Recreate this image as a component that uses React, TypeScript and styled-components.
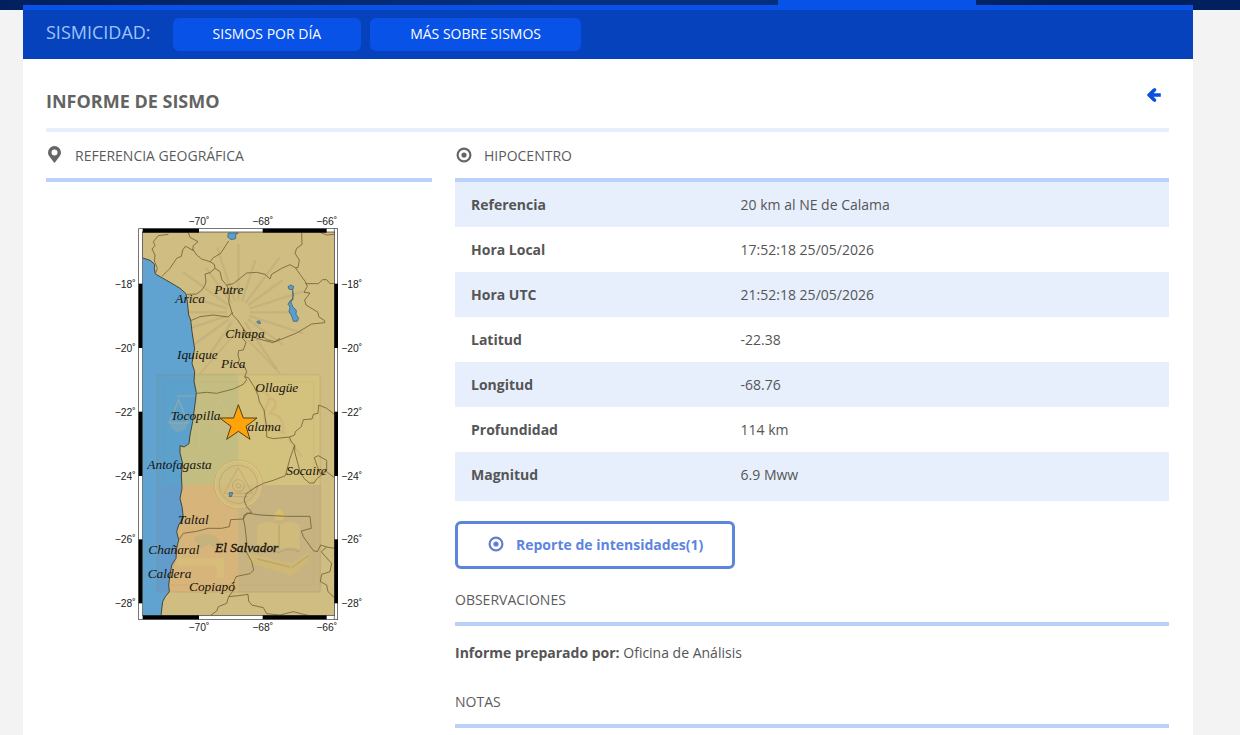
import React from "react";
import styled, { createGlobalStyle } from "styled-components";

const GlobalStyle = createGlobalStyle`
  *, *::before, *::after { box-sizing: border-box; }
  body {
    margin: 0;
    background: #f3f3f3;
    color: #555;
    font-family: "Open Sans", sans-serif;
    font-size: 14px;
    line-height: 20px;
  }
  h1, h2, p { margin: 0; }
`;

const Shell = styled.div`
  display: flex;
  flex-direction: column;
  min-height: 100vh;
`;

const TopStrip = styled.div`
  flex: none;
  display: flex;
  justify-content: flex-end;
  height: 10px;
  padding: 0 264px 0 23px;
  background: linear-gradient(90deg, #03205e 0%, #05307f 45%, #05307f 62%, #03205e 85%);
`;

const ActiveTab = styled.div`
  width: 198px;
  background: #0952e8;
`;

const Page = styled.div`
  flex: 1;
  margin: -5px 47px 0 23px;
  background: #fff;
`;

const SubNav = styled.nav`
  display: flex;
  align-items: center;
  gap: 9px;
  height: 54px;
  padding: 0 23px;
  border-top: 5px solid #0952e8;
  background: #0542bb;
`;

const SubNavTitle = styled.span`
  margin-right: 13px;
  padding-bottom: 6px;
  color: #9cc5fb;
  font-size: 18px;
  line-height: 24px;
`;

const NavLink = styled.a`
  padding: 6px 40px 7px;
  border-radius: 6px;
  background: #0952e8;
  color: #fff;
  text-decoration: none;
`;

const Content = styled.main`
  padding: 0 24px 7px 23px;
`;

const TitleBar = styled.header`
  display: flex;
  justify-content: space-between;
  height: 73px;
  padding: 28px 7px 0 0;
  border-bottom: 4px solid #e7effd;
`;

const Title = styled.h1`
  color: #636363;
  font-size: 18px;
  font-weight: 700;
  line-height: 28px;
`;

const BackLink = styled.a`
  padding-top: 1px;
  color: #0952dc;
  svg { display: block; }
`;

const Columns = styled.div`
  display: grid;
  grid-template-columns: 386fr 714fr;
  gap: 23px;
`;

const SectionTitle = styled.h2`
  display: flex;
  align-items: center;
  gap: 12px;
  padding: 14px 0 12px;
  border-bottom: 4px solid #bbd1fa;
  color: #5c5c5c;
  font-size: 14px;
  font-weight: 400;
  line-height: 20px;
`;

const IconSlot = styled.span`
  display: flex;
  justify-content: center;
  width: 17px;
  padding-bottom: 3px;
  color: #666;
`;

const MapFigure = styled.figure`
  display: flex;
  justify-content: center;
  margin: 0;
  padding: 23px 0 0 2px;
`;

const DataTable = styled.table`
  width: 100%;
  border-collapse: separate;
  border-spacing: 0;
  table-layout: fixed;
`;

const DataRow = styled.tr<{ $shaded: boolean }>`
  background: ${(p) => (p.$shaded ? "#e7effd" : "#fff")};
  &:last-child > * { border-bottom: 4px solid #e7effd; }
`;

const DataLabel = styled.th`
  width: 40%;
  padding: 13px 16px 12px;
  text-align: left;
  font-weight: 700;
`;

const DataValue = styled.td`
  padding: 13px 0 12px;
`;

const ReportButton = styled.button`
  display: flex;
  align-items: center;
  gap: 12px;
  height: 48px;
  margin: 20px 0 7px;
  padding: 0 29px;
  border: 3px solid #5b86dc;
  border-radius: 6px;
  background: #fff;
  color: #5c84e0;
  font: 700 14px/20px "Open Sans", sans-serif;
  cursor: pointer;
  ${IconSlot} { color: #5f80cc; }
`;

const Note = styled.p`
  padding: 17px 0 15px;
`;

const TargetIcon = () => (
  <svg width="16" height="16" viewBox="0 0 16 16" aria-hidden="true">
    <circle cx="8" cy="8" r="6.4" fill="none" stroke="currentColor" strokeWidth="2.2" />
    <circle cx="8" cy="8" r="2.6" fill="currentColor" />
  </svg>
);

const PinIcon = () => (
  <svg width="13" height="17" viewBox="0 0 13 17" aria-hidden="true">
    <path
      fill="currentColor"
      fillRule="evenodd"
      d="M6.5 0A6.5 6.5 0 0 0 0 6.5C0 9.8 3.3 12.6 6.5 17 9.7 12.6 13 9.8 13 6.5A6.5 6.5 0 0 0 6.5 0Zm0 3.6a3 3 0 1 1 0 6 3 3 0 0 1 0-6Z"
    />
  </svg>
);

const ArrowIcon = () => (
  <svg width="15" height="14" viewBox="0 0 15 14" aria-hidden="true">
    <path
      d="M7.6 1.7 2.2 7l5.4 5.3M3 7h10.8"
      fill="none"
      stroke="currentColor"
      strokeWidth="3.4"
      strokeLinejoin="round"
    />
    <path d="M7.8 1.7 2.2 7l5.6 5.3" fill="none" stroke="currentColor" strokeWidth="3" strokeLinecap="round" />
  </svg>
);

const COAST =
  "128,159 150,166 164,178 163,190 166,207 182,216 210,232 240,250 258,266 262,290 266,330 272,345 276,380 284,432 280,450 276,475 284,500 282,530 289,563 286,590 278,650 270,690 267,716 252,726 240,722 240,745 248,775 244,810 246,850 240,880 246,905 250,938 236,960 230,980 236,1005 230,1030 228,1060 215,1080 210,1110 206,1140 208,1160 196,1175 188,1190 183,1231";

const BORDERS = [
  "205,88 175,92 160,110 165,122 156,132 165,150 163,168 172,190 166,207",
  "265,82 270,97 294,110 280,122 278,136 265,128 256,124 248,135 244,154 230,160 210,190 186,214",
  "278,132 290,150 305,162 330,170 343,178 345,190 360,200 366,225 380,240 386,255 388,275 386,290 392,310 398,330 412,344 426,365 434,380 428,400 438,412 430,435 416,437 414,450 418,465 413,478 434,485 440,500 434,515 445,518 462,545 474,570 478,590 492,615 500,670 500,696 520,701 568,696",
  "386,108 375,125 362,145 340,158 330,170",
  "262,268 290,267 305,256 315,240 318,228 315,207 330,203 345,190",
  "270,348 300,335 340,330 385,336 398,322",
  "380,240 400,236 440,204 470,202 495,208 510,222 515,208 545,190 570,179 586,188 600,208 616,230 622,244 612,262 630,264 614,285 618,300 638,312 654,322 656,335 674,347 674,353 635,357 590,384 518,413 470,400 440,385 426,365",
  "605,82 606,118 590,130 585,145 598,165 594,188 586,188",
  "616,236 655,236 668,224 680,224 690,236 703,235",
  "660,82 680,90 703,88",
  "480,386 500,404 525,410 540,400",
  "289,565 320,562 350,565 400,552 430,538 440,524 434,515",
  "703,628 680,610 656,600 654,625 640,628 636,642 610,644 604,665 586,680 584,690 568,696 575,712 584,720 570,760 556,812 520,826 490,835 465,848 440,865 432,885 440,905 455,922 432,930 430,942 392,944 388,965 365,970 325,970 290,979 250,985 236,1005",
  "584,720 584,740 600,800 612,820 628,834 642,834 650,822 662,812 680,798 680,766 655,752 643,758 652,785 662,808",
  "680,800 703,818",
  "440,924 480,930 560,934 630,934 634,970 604,978 610,995 640,1037 652,1040 662,1020 680,1026 703,1030",
  "440,924 430,942 435,965 440,1010 436,1035 455,1070 461,1095 450,1106 420,1112 408,1115 400,1135 405,1150 386,1175 380,1195 355,1205 350,1218 332,1231",
  "386,1175 415,1172 444,1168 446,1188 455,1200 490,1208 500,1226 540,1230 580,1220 610,1228 625,1231",
  "680,1026 664,1040 672,1050 695,1075 690,1100 665,1108 661,1130 680,1140 684,1160 703,1178",
];

const CITIES: [string, number, number][] = [
  ["Arica", 226, 294],
  ["Putre", 343, 267],
  ["Chiapa", 376, 400],
  ["Iquique", 231, 463],
  ["Pica", 363, 488],
  ["Ollagüe", 466, 560],
  ["Tocopilla", 212, 644],
  ["Calama", 416, 678],
  ["Antofagasta", 142, 792],
  ["Socaire", 559, 810],
  ["Taltal", 234, 957],
  ["Chañaral", 145, 1047],
  ["El Salvador", 345, 1041],
  ["Caldera", 143, 1119],
  ["Copiapó", 267, 1159],
];

const LONGITUDES: [string, number][] = [["−70˚", 297], ["−68˚", 488], ["−66˚", 680]];
const LATITUDES: [string, number][] = [
  ["−18˚", 236],
  ["−20˚", 429],
  ["−22˚", 620],
  ["−24˚", 813],
  ["−26˚", 1003],
  ["−28˚", 1195],
];
const RAYS = [-90, -72, -53, -36, -18, 0, 18, 36, 56, 124, 144, 162, 180, 198, 216, 234, 252];

const SeismMap = () => (
  <svg width="280" height="435" viewBox="0 0 840 1305" role="img" aria-label="Mapa de referencia geográfica">
    <rect x="116" y="71" width="597" height="1173" fill="#fff" stroke="#333" strokeWidth="2" />
    <rect x="127" y="81" width="577" height="1150" fill="#d0bd82" stroke="#333" strokeWidth="2" />

    {/* watermark: rays and the quartered shield */}
    <g stroke="#8e7c55" strokeWidth="7" opacity="0.14">
      {RAYS.map((a, i) => {
        const r = (a * Math.PI) / 180;
        const len = i % 2 ? 165 : 205;
        return (
          <line
            key={a}
            x1={415 + 35 * Math.cos(r)}
            y1={322 + 35 * Math.sin(r)}
            x2={415 + len * Math.cos(r)}
            y2={322 + len * Math.sin(r)}
          />
        );
      })}
    </g>
    <path d="M415 375 540 505M415 375 300 505" stroke="#b99b66" strokeWidth="5" opacity="0.3" />
    <rect x="170" y="507" width="245" height="333" fill="#98bd83" opacity="0.2" />
    <rect x="415" y="507" width="247" height="333" fill="#dccb78" opacity="0.3" />
    <rect x="170" y="840" width="245" height="322" fill="#ee9560" opacity="0.22" />
    <rect x="415" y="840" width="247" height="322" fill="#af9580" opacity="0.26" />

    <polygon points={`${COAST} 128,1231`} fill="#60a3d1" />
    <path d="M170 507H284L289 563 267 716 240 722 248 775 244 840H170Z" fill="#4b96b8" opacity="0.18" />
    <path d="M170 840H246L240 880 250 938 230 980 228 1060 206 1140 208 1162H170Z" fill="#7080b8" opacity="0.18" />

    {/* watermark: emblems */}
    <rect x="171" y="509" width="490" height="652" rx="8" fill="none" stroke="#a98652" strokeWidth="5" opacity="0.18" />
    <rect x="191" y="530" width="450" height="610" rx="8" fill="none" stroke="#a98652" strokeWidth="4" opacity="0.08" />
    <g fill="none" stroke="#d9bd7a" strokeWidth="5" opacity="0.3">
      <path d="M298 570v160M230 573h140M270 732h60M236 585l-28 68h56zM362 585l-32 68h62z" />
    </g>
    <path d="M208 653h56q-8 28-28 28t-28-28zM330 653h62q-8 28-31 28t-31-28z" fill="#d0bd82" opacity="0.2" />
    <path
      d="M470 560q25-10 40 20l-15 35q-10 30 15 50l45 20M500 585q35-10 25 20l-15 20q45 5 40 60M565 700l40 55"
      fill="none"
      stroke="#c99a6c"
      strokeWidth="7"
      opacity="0.25"
    />
    <g>
      <circle cx="415" cy="838" r="71" fill="#d5bf80" stroke="#e2cc83" strokeWidth="7" opacity="0.6" />
      <g fill="none" stroke="#a98d5c" strokeWidth="3" opacity="0.4">
        <circle cx="415" cy="838" r="73" />
        <circle cx="415" cy="838" r="57" />
        <path d="M415 788 458 865H372z" />
        <circle cx="415" cy="842" r="18" />
        <circle cx="415" cy="842" r="7" />
        <path d="M385 875h60" />
      </g>
    </g>
    <g opacity="0.36">
      <path d="M472 960q35-18 65 0 30-18 62 0v74q-32-18-62 0-30-18-65 0z" fill="#e2cb78" />
      <path d="M537 960v74M468 1040q35-14 68 3 32-18 62-3" fill="none" stroke="#a98b55" strokeWidth="4" />
      <path d="M445 1045 575 1075 625 1040v26l-50 46-130-40z" fill="#ddc15b" />
      <path d="M472 1062 570 1086M575 1088l50-36" stroke="#aa9250" strokeWidth="4" />
      <path d="M538 910q25 22 10 36h-20q-13-16 10-36z" fill="#efd34b" />
    </g>
    <path d="M230 1060h142v60h-22v-38H230z" fill="#d8c278" opacity="0.6" />
    <path d="M280 1000q35-25 70-4l18 25-18 15-22-20-25 15z" fill="#aab083" opacity="0.35" />

    <polyline points={COAST} fill="none" stroke="#45463a" strokeWidth="3" />
    <g fill="none" stroke="#75643a" strokeWidth="2.6" strokeLinejoin="round">
      {BORDERS.map((points) => (
        <polyline key={points} points={points} />
      ))}
    </g>
    <g fill="#579fd0" stroke="#34566b" strokeWidth="2">
      <path d="M385 84h30l-8 5v12l-14 3-10-8z" />
      <path d="M564 245l8-5 9 4-2 10-12-1zM578 256l2 16-7 20 6 14 10 10-1 12 8 12-4 9h-12l-5-16-8-13 3-14-6-8 7-12 8-2z" />
      <path d="M470 350l8-3 4 8-7 1zM388 863l10-1-3 12-7 1z" />
    </g>

    <g fontFamily='"Liberation Serif", serif' fontStyle="italic" fontSize="40" fill="#17130c">
      {CITIES.map(([name, x, y]) => (
        <text key={name} x={x} y={y} stroke="#17130c" strokeWidth={name === "El Salvador" ? 1 : 0}>
          {name}
        </text>
      ))}
    </g>
    <polygon
      points="415,599 430,639 471,639 438,664 450,703 415,679 380,703 393,664 359,639 401,639"
      fill="#ffa30a"
      stroke="#533f1c"
      strokeWidth="3"
    />

    {[71, 1231].map((y) => (
      <g key={y}>
        <rect x="128" y={y} width="169" height="12" />
        <rect x="488" y={y} width="192" height="12" />
        <path d={`M703 ${y}v12`} stroke="#333" strokeWidth="2" />
      </g>
    ))}
    {[116, 703].map((x) => (
      <g key={x}>
        <rect x={x} y="236" width="11" height="193" />
        <rect x={x} y="620" width="11" height="193" />
        <rect x={x} y="1003" width="11" height="192" />
      </g>
    ))}
    <g fontFamily='"Liberation Sans", sans-serif' fontSize="31" fill="#222">
      {LONGITUDES.map(([label, x]) => (
        <React.Fragment key={label}>
          <text x={x} y="60" textAnchor="middle">{label}</text>
          <text x={x} y="1277" textAnchor="middle">{label}</text>
        </React.Fragment>
      ))}
      {LATITUDES.map(([label, y]) => (
        <React.Fragment key={label}>
          <text x="107" y={y + 12} textAnchor="end">{label}</text>
          <text x="724" y={y + 12}>{label}</text>
        </React.Fragment>
      ))}
    </g>
  </svg>
);

const ROWS: [string, string][] = [
  ["Referencia", "20 km al NE de Calama"],
  ["Hora Local", "17:52:18 25/05/2026"],
  ["Hora UTC", "21:52:18 25/05/2026"],
  ["Latitud", "-22.38"],
  ["Longitud", "-68.76"],
  ["Profundidad", "114 km"],
  ["Magnitud", "6.9 Mww"],
];

export default function App() {
  return (
    <Shell>
      <GlobalStyle />
      <TopStrip>
        <ActiveTab />
      </TopStrip>
      <Page>
        <SubNav>
          <SubNavTitle>SISMICIDAD:</SubNavTitle>
          <NavLink href="#dia">SISMOS POR DÍA</NavLink>
          <NavLink href="#mas">MÁS SOBRE SISMOS</NavLink>
        </SubNav>
        <Content>
          <TitleBar>
            <Title>INFORME DE SISMO</Title>
            <BackLink href="#volver" aria-label="Volver">
              <ArrowIcon />
            </BackLink>
          </TitleBar>
          <Columns>
            <section>
              <SectionTitle>
                <IconSlot><PinIcon /></IconSlot>
                REFERENCIA GEOGRÁFICA
              </SectionTitle>
              <MapFigure>
                <SeismMap />
              </MapFigure>
            </section>
            <section>
              <SectionTitle>
                <IconSlot><TargetIcon /></IconSlot>
                HIPOCENTRO
              </SectionTitle>
              <DataTable>
                <tbody>
                  {ROWS.map(([label, value], i) => (
                    <DataRow key={label} $shaded={i % 2 === 0}>
                      <DataLabel scope="row">{label}</DataLabel>
                      <DataValue>{value}</DataValue>
                    </DataRow>
                  ))}
                </tbody>
              </DataTable>
              <ReportButton type="button">
                <IconSlot><TargetIcon /></IconSlot>
                Reporte de intensidades(1)
              </ReportButton>
              <SectionTitle>OBSERVACIONES</SectionTitle>
              <Note>
                <strong>Informe preparado por:</strong> Oficina de Análisis
              </Note>
              <SectionTitle>NOTAS</SectionTitle>
            </section>
          </Columns>
        </Content>
      </Page>
    </Shell>
  );
}
